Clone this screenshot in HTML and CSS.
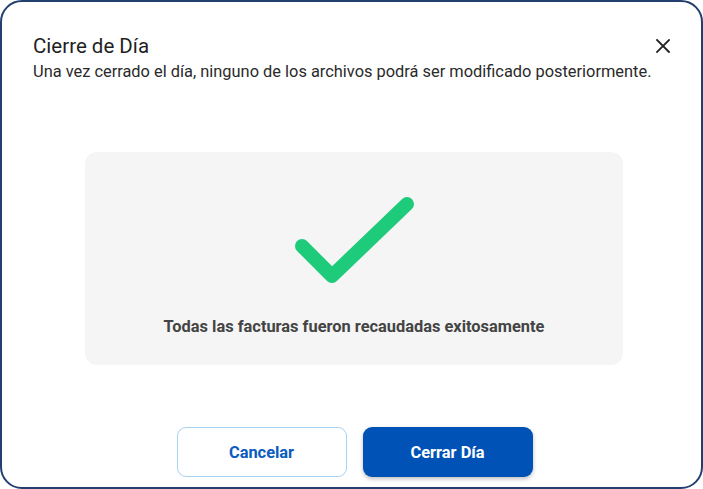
FILE: index.html
```html
<!DOCTYPE html>
<html lang="es">
<head>
<meta charset="utf-8">
<link rel="stylesheet" href="styles.css">
</head>
<body>
<div class="modal">
  <div class="header">
    <div class="titles">
      <h1 class="title">Cierre de Día</h1>
      <p class="subtitle">Una vez cerrado el día, ninguno de los archivos podrá ser modificado posteriormente.</p>
    </div>
    <button class="close" aria-label="Cerrar">
      <svg width="14" height="14" viewBox="0 0 14 14"><path d="M1 1L13 13M13 1L1 13" stroke="#222" stroke-width="1.8" stroke-linecap="square"/></svg>
    </button>
  </div>
  <div class="panel">
    <svg class="check" width="120" height="88" viewBox="0 0 120 88"><path d="M7 49L37 79L112 7" fill="none" stroke="#1ecb7b" stroke-width="14" stroke-linecap="round" stroke-linejoin="round"/></svg>
    <p class="message">Todas las facturas fueron recaudadas exitosamente</p>
  </div>
  <div class="actions">
    <button class="btn btn-outline">Cancelar</button>
    <button class="btn btn-primary">Cerrar Día</button>
  </div>
</div>
</body>
</html>
```
FILE: styles.css
```css
html, body {
  margin: 0;
  padding: 0;
  background: #ffffff;
}
body {
  font-family: Roboto, "Liberation Sans", sans-serif;
}
.modal {
  width: 703px;
  height: 489px;
  box-sizing: border-box;
  border: 2px solid #233f70;
  border-radius: 22px;
  background: #fff;
  padding: 31px 31px 0 31px;
  display: flex;
  flex-direction: column;
}
.header {
  display: flex;
  justify-content: space-between;
  align-items: flex-start;
}
.title {
  margin: 0;
  font-size: 20.5px;
  font-weight: 400;
  line-height: 26px;
  color: #1f1f1f;
}
.subtitle {
  margin: 3px 0 0 0;
  font-size: 16.4px;
  line-height: 20px;
  color: #2a2a2a;
}
.close {
  background: none;
  border: none;
  padding: 0;
  margin: 6px 0 0 0;
  width: 14px;
  height: 14px;
  cursor: pointer;
  display: flex;
}
.panel {
  margin: 70px 47px 0 52px;
  height: 213px;
  background: #f5f5f5;
  border-radius: 12px;
  display: flex;
  flex-direction: column;
  align-items: center;
}
.check {
  margin-top: 45px;
  margin-left: 2px;
}
.message {
  margin: 32px 0 0 0;
  font-size: 16.4px;
  font-weight: 700;
  color: #444;
  line-height: 20px;
}
.actions {
  margin-top: 62px;
  display: flex;
  justify-content: center;
  gap: 16px;
  padding-left: 6px;
}
.btn {
  width: 170px;
  height: 50px;
  box-sizing: border-box;
  border-radius: 9px;
  font-family: Roboto, "Liberation Sans", sans-serif;
  font-size: 16.4px;
  font-weight: 700;
  cursor: pointer;
}
.btn-outline {
  background: #fff;
  border: 1px solid #a6d3f0;
  color: #0a5cbf;
}
.btn-primary {
  background: #0052b6;
  border: none;
  color: #fff;
  box-shadow: 0 2px 4px rgba(0,0,0,0.25);
}
```
